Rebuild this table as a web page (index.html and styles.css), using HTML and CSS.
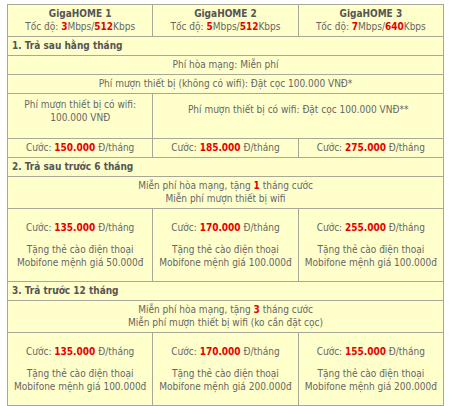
FILE: index.html
```html
<!DOCTYPE html>
<html lang="vi">
<head>
<meta charset="utf-8">
<link rel="stylesheet" href="styles.css">
</head>
<body>
<table class="plans">
  <tr class="head">
    <td><b>GigaHOME 1</b><br>Tốc độ: <span class="red">3</span>Mbps/<span class="red">512</span>Kbps</td>
    <td><b>GigaHOME 2</b><br>Tốc độ: <span class="red">5</span>Mbps/<span class="red">512</span>Kbps</td>
    <td><b>GigaHOME 3</b><br>Tốc độ: <span class="red">7</span>Mbps/<span class="red">640</span>Kbps</td>
  </tr>
  <tr><td colspan="3" class="section">1. Trả sau hằng tháng</td></tr>
  <tr><td colspan="3">Phí hòa mạng: Miễn phí</td></tr>
  <tr><td colspan="3">Phí mượn thiết bị (không có wifi): Đặt cọc 100.000 VNĐ*</td></tr>
  <tr>
    <td class="tall">Phí mượn thiết bị có wifi:<br>100.000 VNĐ</td>
    <td colspan="2" class="tall mid">Phí mượn thiết bị có wifi: Đặt cọc 100.000 VNĐ**</td>
  </tr>
  <tr>
    <td>Cước: <span class="red">150.000</span> Đ/tháng</td>
    <td>Cước: <span class="red">185.000</span> Đ/tháng</td>
    <td>Cước: <span class="red">275.000</span> Đ/tháng</td>
  </tr>
  <tr><td colspan="3" class="section">2. Trả sau trước 6 tháng</td></tr>
  <tr><td colspan="3">Miễn phí hòa mạng, tặng <span class="red">1</span> tháng cước<br>Miễn phí mượn thiết bị wifi</td></tr>
  <tr class="offer">
    <td><p>Cước: <span class="red">135.000</span> Đ/tháng</p><p>Tặng thẻ cào điện thoại<br>Mobifone mệnh giá 50.000đ</p></td>
    <td><p>Cước: <span class="red">170.000</span> Đ/tháng</p><p>Tặng thẻ cào điện thoại<br>Mobifone mệnh giá 100.000đ</p></td>
    <td><p>Cước: <span class="red">255.000</span> Đ/tháng</p><p>Tặng thẻ cào điện thoại<br>Mobifone mệnh giá 100.000đ</p></td>
  </tr>
  <tr><td colspan="3" class="section">3. Trả trước 12 tháng</td></tr>
  <tr><td colspan="3">Miễn phí hòa mạng, tặng <span class="red">3</span> tháng cước<br>Miễn phí mượn thiết bị wifi (ko cần đặt cọc)</td></tr>
  <tr class="offer">
    <td><p>Cước: <span class="red">135.000</span> Đ/tháng</p><p>Tặng thẻ cào điện thoại<br>Mobifone mệnh giá 100.000đ</p></td>
    <td><p>Cước: <span class="red">170.000</span> Đ/tháng</p><p>Tặng thẻ cào điện thoại<br>Mobifone mệnh giá 200.000đ</p></td>
    <td><p>Cước: <span class="red">155.000</span> Đ/tháng</p><p>Tặng thẻ cào điện thoại<br>Mobifone mệnh giá 200.000đ</p></td>
  </tr>
</table>
</body>
</html>
```

FILE: styles.css
```css
html, body {
  margin: 0;
  padding: 0;
  background: #ffffff;
}
body {
  font-family: "DejaVu Sans Condensed", "DejaVu Sans", sans-serif;
  font-stretch: condensed;
  font-size: 10px;
  color: #666;
}
.plans {
  margin: 4px 0 0 7px;
  width: 437px;
  table-layout: fixed;
  border-collapse: collapse;
  background: #ffffcc;
  border: 1px solid #a8a898;
}
.plans td {
  border: 1px solid #a8a898;
  text-align: center;
  vertical-align: middle;
  padding: 2px 2px 3px;
  line-height: 13px;
}
.plans b {
  color: #555;
}
.plans .section {
  text-align: left;
  font-weight: bold;
  color: #555;
  padding-left: 4px;
}
.red {
  color: #e60000;
  font-weight: bold;
}
.plans .tall {
  vertical-align: top;
  padding-top: 4px;
  padding-bottom: 14px;
}
.plans .tall.mid {
  padding-top: 9px;
}
.offer td {
  padding-top: 12px;
  padding-bottom: 12px;
}
.offer p {
  margin: 0;
}
.offer p + p {
  margin-top: 9px;
}
```
